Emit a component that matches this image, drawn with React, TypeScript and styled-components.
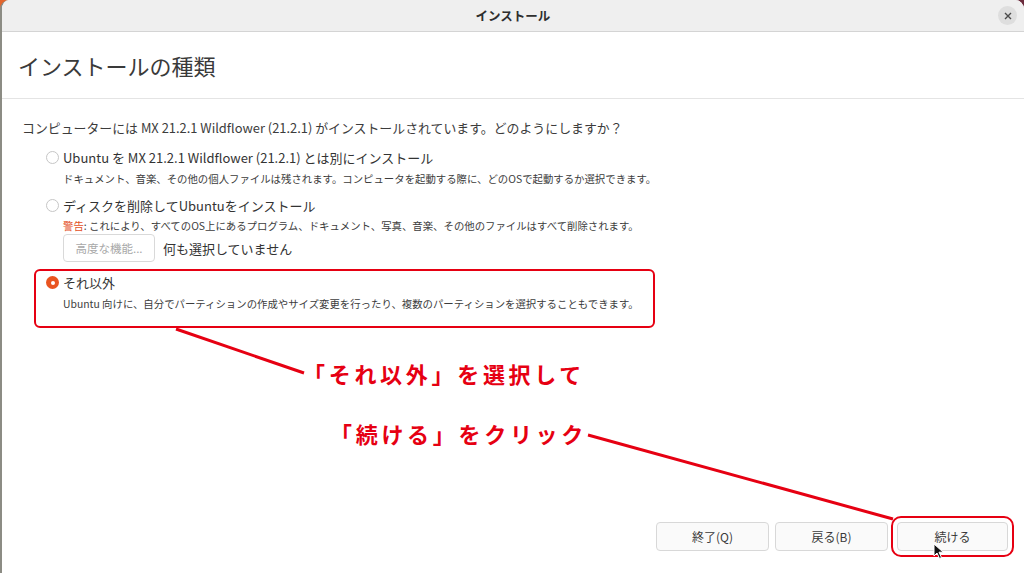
import React from "react";
import styled, { createGlobalStyle, css } from "styled-components";

const GlobalStyle = createGlobalStyle`
  html, body {
    margin: 0;
    padding: 0;
    background: linear-gradient(90deg, #e3662e, #6a2a3c);
  }
  * {
    box-sizing: border-box;
  }
`;

const UI_FONT = `"Noto Sans CJK JP", "Noto Sans", sans-serif`;

const Window = styled.div`
  position: relative;
  width: 1024px;
  height: 573px;
  display: flex;
  flex-direction: column;
  background: #ffffff;
  border-left: 2px solid #8c8c84;
  border-radius: 9px 9px 0 0;
  overflow: hidden;
  font-family: ${UI_FONT};
  color: #3c3c3c;
`;

const TitleBar = styled.div`
  height: 32px;
  flex-shrink: 0;
  display: grid;
  grid-template-columns: 1fr auto 1fr;
  align-items: center;
  background: #efefef;
  border-bottom: 1px solid #d4d4d4;
`;

const Title = styled.div`
  grid-column: 2;
  font-size: 12.5px;
  font-weight: 700;
  color: #2e2e2e;
`;

const CloseButton = styled.div`
  grid-column: 3;
  justify-self: end;
  margin-right: 7px;
  width: 19px;
  height: 19px;
  border-radius: 50%;
  background: #dedede;
  display: flex;
  align-items: center;
  justify-content: center;
`;

const Header = styled.div`
  height: 67px;
  flex-shrink: 0;
  display: flex;
  align-items: center;
  padding-left: 16px;
  border-bottom: 1px solid #e4e4e4;
`;

const Heading = styled.h1`
  margin: 0;
  font-size: 22px;
  font-weight: 400;
  color: #3a3a3a;
`;

const Body = styled.div`
  flex: 1;
  display: flex;
  flex-direction: column;
  padding: 20px 20px 0;
`;

const Question = styled.div`
  font-size: 12.9px;
  line-height: 18px;
`;

const OptionList = styled.div`
  display: flex;
  flex-direction: column;
  gap: 10px;
  margin-top: 12px;
  padding-left: 24px;
`;

const Option = styled.div<{ $highlighted?: boolean }>`
  display: grid;
  grid-template-columns: 17px auto;
  align-items: start;
  ${({ $highlighted }) =>
    $highlighted &&
    css`
      width: 621px;
      margin: -3px 0 0 -12px;
      padding: 3px 10px 14px;
      border: 2px solid #e60012;
      border-radius: 6px;
    `}
`;

const Radio = styled.span<{ $checked?: boolean }>`
  margin-top: 2px;
  width: 13px;
  height: 13px;
  border-radius: 50%;
  display: flex;
  align-items: center;
  justify-content: center;
  ${({ $checked }) =>
    $checked
      ? css`
          background: #e95420;
          &::after {
            content: "";
            width: 4px;
            height: 4px;
            border-radius: 50%;
            background: #ffffff;
          }
        `
      : css`
          background: #ffffff;
          border: 1px solid #c6c6c6;
        `}
`;

const OptionContent = styled.div`
  display: flex;
  flex-direction: column;
`;

const Label = styled.div`
  font-size: 13px;
  line-height: 18px;
  color: #333333;
`;

const Description = styled.div<{ $tight?: boolean }>`
  margin-top: ${({ $tight }) => ($tight ? 3 : 4)}px;
  font-size: 10.4px;
  line-height: 16px;
  color: #3c3c3c;
  white-space: nowrap;
`;

const Warn = styled.span`
  color: #e3501e;
`;

const AdvancedRow = styled.div`
  display: flex;
  align-items: center;
  gap: 8px;
`;

const AdvancedButton = styled.div`
  width: 92px;
  height: 28px;
  display: flex;
  align-items: center;
  justify-content: center;
  border: 1px solid #d9d9d9;
  border-radius: 4px;
  font-size: 11.5px;
  color: #a8a8a8;
`;

const StatusText = styled.span`
  font-size: 13px;
  color: #333333;
`;

const Footer = styled.div`
  display: flex;
  justify-content: flex-end;
  gap: 6px;
  padding: 0 16px 22px;
`;

const FooterButton = styled.div<{ $width: number; $highlighted?: boolean }>`
  width: ${({ $width }) => $width}px;
  height: 29px;
  display: flex;
  align-items: center;
  justify-content: center;
  background: #fafafa;
  border: 1px solid #d8d8d8;
  border-radius: 4px;
  font-size: 12px;
  color: #3a3a3a;
  ${({ $highlighted }) =>
    $highlighted &&
    css`
      margin-left: 3px;
      outline: 2px solid #e60012;
      outline-offset: 4px;
      border-radius: 4px;
    `}
`;

const Overlay = styled.svg`
  position: absolute;
  left: -2px;
  top: 0;
  width: 1024px;
  height: 573px;
  pointer-events: none;
`;

const Callout = styled.div<{ $x: number; $y: number }>`
  position: absolute;
  left: ${({ $x }) => $x}px;
  top: ${({ $y }) => $y}px;
  font-family: ${UI_FONT};
  font-size: 22px;
  font-weight: 700;
  letter-spacing: 3.7px;
  line-height: 30px;
  color: #e60012;
  white-space: nowrap;
`;

const Cursor = styled.svg`
  position: absolute;
  left: 931px;
  top: 543px;
  pointer-events: none;
`;

export default function App() {
  return (
    <>
      <GlobalStyle />
      <Window>
        <TitleBar>
          <Title>インストール</Title>
          <CloseButton>
            <svg width="8" height="8" viewBox="0 0 8 8">
              <path d="M1 1 L7 7 M7 1 L1 7" stroke="#4a4a4a" strokeWidth="1.4" />
            </svg>
          </CloseButton>
        </TitleBar>
        <Header>
          <Heading>インストールの種類</Heading>
        </Header>
        <Body>
          <Question>
            コンピューターには MX 21.2.1 Wildflower (21.2.1) がインストールされています。どのようにしますか？
          </Question>
          <OptionList>
            <Option>
              <Radio />
              <OptionContent>
                <Label>Ubuntu を MX 21.2.1 Wildflower (21.2.1) とは別にインストール</Label>
                <Description>
                  ドキュメント、音楽、その他の個人ファイルは残されます。コンピュータを起動する際に、どのOSで起動するか選択できます。
                </Description>
              </OptionContent>
            </Option>
            <Option>
              <Radio />
              <OptionContent>
                <Label>ディスクを削除してUbuntuをインストール</Label>
                <Description $tight>
                  <Warn>警告</Warn>: これにより、すべてのOS上にあるプログラム、ドキュメント、写真、音楽、その他のファイルはすべて削除されます。
                </Description>
                <AdvancedRow>
                  <AdvancedButton>高度な機能...</AdvancedButton>
                  <StatusText>何も選択していません</StatusText>
                </AdvancedRow>
              </OptionContent>
            </Option>
            <Option $highlighted>
              <Radio $checked />
              <OptionContent>
                <Label>それ以外</Label>
                <Description>
                  Ubuntu 向けに、自分でパーティションの作成やサイズ変更を行ったり、複数のパーティションを選択することもできます。
                </Description>
              </OptionContent>
            </Option>
          </OptionList>
        </Body>
        <Footer>
          <FooterButton $width={113}>終了(Q)</FooterButton>
          <FooterButton $width={113}>戻る(B)</FooterButton>
          <FooterButton $width={111} $highlighted>
            続ける
          </FooterButton>
        </Footer>

        <Overlay viewBox="0 0 1024 573">
          <line x1="176" y1="329" x2="304" y2="373" stroke="#e60012" strokeWidth="3" />
          <line x1="588" y1="435" x2="893" y2="519" stroke="#e60012" strokeWidth="3" />
        </Overlay>
        <Callout $x={301} $y={358}>「それ以外」を選択して</Callout>
        <Callout $x={328} $y={418}>「続ける」をクリック</Callout>
        <Cursor width="12" height="17" viewBox="0 0 12 17">
          <path d="M1 1 L1 13 L4 10 L6.5 15.5 L8.5 14.5 L6 9.2 L10.2 9.2 Z" fill="#111" stroke="#fff" strokeWidth="1" />
        </Cursor>
      </Window>
    </>
  );
}
